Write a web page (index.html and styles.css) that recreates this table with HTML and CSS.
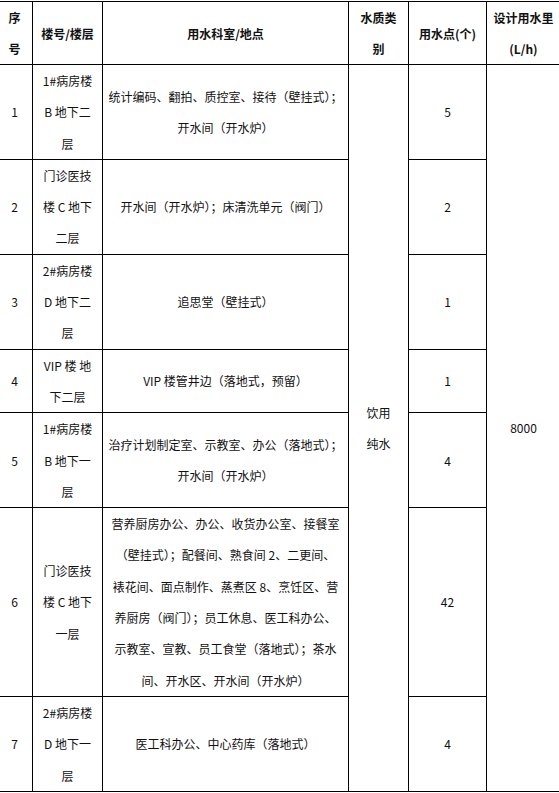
FILE: index.html
```html
<!DOCTYPE html>
<html lang="zh-CN">
<head>
<meta charset="utf-8">
<title>用水点</title>
<link rel="stylesheet" href="styles.css">
</head>
<body>
<table class="grid">
  <colgroup>
    <col class="c-no">
    <col class="c-bld">
    <col class="c-room">
    <col class="c-type">
    <col class="c-pts">
    <col class="c-flow">
  </colgroup>
  <thead>
    <tr class="head">
      <th>序<br>号</th>
      <th>楼号/楼层</th>
      <th>用水科室/地点</th>
      <th>水质类<br>别</th>
      <th>用水点(个)</th>
      <th>设计用水里<br>(L/h)</th>
    </tr>
  </thead>
  <tbody>
    <tr>
      <td>1</td>
      <td>1#病房楼<br>B 地下二<br>层</td>
      <td>统计编码、翻拍、质控室、接待（壁挂式）；<br>开水间（开水炉）</td>
      <td rowspan="7" class="merged">饮用<br>纯水</td>
      <td>5</td>
      <td rowspan="7" class="merged">8000</td>
    </tr>
    <tr>
      <td>2</td>
      <td>门诊医技<br>楼 C 地下<br>二层</td>
      <td>开水间（开水炉）；床清洗单元（阀门）</td>
      <td>2</td>
    </tr>
    <tr>
      <td>3</td>
      <td>2#病房楼<br>D 地下二<br>层</td>
      <td>追思堂（壁挂式）</td>
      <td>1</td>
    </tr>
    <tr>
      <td>4</td>
      <td>VIP 楼 地<br>下二层</td>
      <td>VIP 楼管井边（落地式，预留）</td>
      <td>1</td>
    </tr>
    <tr>
      <td>5</td>
      <td>1#病房楼<br>B 地下一<br>层</td>
      <td>治疗计划制定室、示教室、办公（落地式）；<br>开水间（开水炉）</td>
      <td>4</td>
    </tr>
    <tr>
      <td>6</td>
      <td>门诊医技<br>楼 C 地下<br>一层</td>
      <td>营养厨房办公、办公、收货办公室、接餐室<br>（壁挂式）；配餐间、熟食间 2、二更间、<br>裱花间、面点制作、蒸煮区 8、烹饪区、营<br>养厨房（阀门）；员工休息、医工科办公、<br>示教室、宣教、员工食堂（落地式）；茶水<br>间、开水区、开水间（开水炉）</td>
      <td>42</td>
    </tr>
    <tr>
      <td>7</td>
      <td>2#病房楼<br>D 地下一<br>层</td>
      <td>医工科办公、中心药库（落地式）</td>
      <td>4</td>
    </tr>
  </tbody>
</table>
</body>
</html>
```

FILE: styles.css
```css
html, body {
  margin: 0;
  padding: 0;
  background: #ffffff;
}

body {
  font-family: "Noto Sans CJK SC", "DejaVu Sans", sans-serif;
  font-size: 12px;
  color: #111111;
  overflow: hidden;
}

.grid {
  border-collapse: collapse;
  table-layout: fixed;
  width: 564px;
  margin: 1px 0 0 -4px;
}

.c-no { width: 36px; }
.c-bld { width: 70px; }
.c-room { width: 246px; }
.c-type { width: 60px; }
.c-pts { width: 78px; }
.c-flow { width: 74px; }

.grid th,
.grid td {
  border: 1px solid #000000;
  padding: 0;
  text-align: center;
  vertical-align: middle;
  white-space: nowrap;
  line-height: 31.3px;
  font-weight: normal;
}

.grid th {
  font-weight: bold;
  line-height: 31px;
}

.head th {
  height: 61px;
}
```
